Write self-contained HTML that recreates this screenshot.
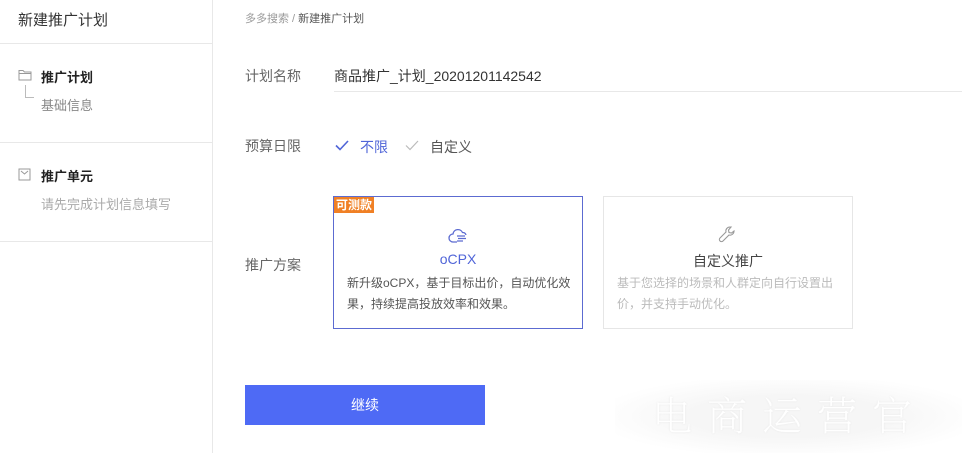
<!DOCTYPE html>
<html><head><meta charset="utf-8"><style>
*{margin:0;padding:0;box-sizing:border-box}
body{width:962px;height:453px;overflow:hidden;background:#fff;font-family:"Liberation Sans","Noto Sans CJK SC",sans-serif;color:#333;position:relative}
.side{position:absolute;left:0;top:0;width:213px;height:453px;border-right:1px solid #e8e8e8}
.a{position:absolute}
.hl{position:absolute;left:0;width:212px;height:1px;background:#e8e8e8}
.lab{position:absolute;left:245px;font-size:14px;color:#666}
.card{position:absolute;top:196px;width:250px;height:133px;border:1px solid #e6e6e6}
</style></head><body>
<div class="side">
<div class="a" style="left:18px;top:9px;font-size:15px;color:#333">新建推广计划</div>
<div class="hl" style="top:43px"></div>
<svg class="a" style="left:18px;top:69px" width="14" height="12" viewBox="0 0 14 12"><path d="M1 1.5h4l1.5 1.5H13v8H1z M1 4.5h12" fill="none" stroke="#999" stroke-width="1"/></svg>
<div class="a" style="left:41px;top:67px;font-size:13px;font-weight:bold;color:#222">推广计划</div>
<div class="a" style="left:25px;top:85px;width:9px;height:13px;border-left:1px solid #bbb;border-bottom:1px solid #bbb"></div>
<div class="a" style="left:41px;top:95px;font-size:13px;color:#888">基础信息</div>
<div class="hl" style="top:142px"></div>
<svg class="a" style="left:18px;top:168px" width="13" height="13" viewBox="0 0 13 13"><path d="M1 1h11v11H1z M3 3l3.5 3L10 3" fill="none" stroke="#999" stroke-width="1"/></svg>
<div class="a" style="left:41px;top:166px;font-size:13px;font-weight:bold;color:#222">推广单元</div>
<div class="a" style="left:41px;top:194px;font-size:13px;color:#aaa">请先完成计划信息填写</div>
<div class="hl" style="top:241px"></div>
</div>
<div class="a" style="left:245px;top:10px;font-size:11px;color:#999">多多搜索 / <span style="color:#555">新建推广计划</span></div>
<div class="lab" style="top:66px">计划名称</div>
<div class="a" style="left:334px;top:66px;font-size:14px;color:#333">商品推广_计划_20201201142542</div>
<div class="a" style="left:334px;top:91px;width:628px;height:1px;background:#e8e8e8"></div>
<div class="lab" style="top:136px">预算日限</div>
<svg class="a" style="left:335px;top:140px" width="14" height="11" viewBox="0 0 14 11"><path d="M1 5.5l4 4L13 1" fill="none" stroke="#5065d8" stroke-width="1.6"/></svg>
<div class="a" style="left:360px;top:137px;font-size:14px;color:#5065d8">不限</div>
<svg class="a" style="left:405px;top:140px" width="14" height="11" viewBox="0 0 14 11"><path d="M1 5.5l4 4L13 1" fill="none" stroke="#bbb" stroke-width="1.2"/></svg>
<div class="a" style="left:430px;top:137px;font-size:14px;color:#555">自定义</div>
<div class="lab" style="top:255px">推广方案</div>
<div class="card" style="left:333px;border-color:#5c6bd1">
<div class="a" style="left:0;top:0;background:#f08025;color:#fff;font-size:12px;font-weight:bold;padding:0 2px;line-height:16px">可测款</div>
<svg class="a" style="left:114px;top:30px" width="22" height="18" viewBox="0 0 22 18"><path d="M9 15H5a4 4 0 0 1 0-8 5 5 0 0 1 9.5-1.5A3.5 3.5 0 0 1 18 8 M9 9h8 M10 11.5h8 M9 14h6" fill="none" stroke="#5c6bd1" stroke-width="1.3"/></svg>
<div class="a" style="left:0;width:248px;top:54px;text-align:center;font-size:14px;color:#5065d8">oCPX</div>
<div class="a" style="left:13px;top:76px;width:226px;font-size:12px;line-height:21px;color:#555">新升级oCPX，基于目标出价，自动优化效果，持续提高投放效率和效果。</div>
</div>
<div class="card" style="left:603px">
<svg class="a" style="left:113px;top:27px" width="22" height="22" viewBox="0 0 22 22"><path d="M13 3a4 4 0 0 0-4 5L3 14a2 2 0 0 0 3 3l6-6a4 4 0 0 0 5-4l-2.5 2-2.5-.5-.5-2.5L14 3z" fill="none" stroke="#999" stroke-width="1.1"/></svg>
<div class="a" style="left:0;width:248px;top:54px;text-align:center;font-size:14px;color:#444">自定义推广</div>
<div class="a" style="left:13px;top:76px;width:226px;font-size:12px;line-height:21px;color:#bbb">基于您选择的场景和人群定向自行设置出价，并支持手动优化。</div>
</div>
<div class="a" style="left:245px;top:385px;width:240px;height:40px;background:#4e6af5;color:#fff;font-size:14px;text-align:center;line-height:40px">继续</div>
<div class="a" style="left:615px;top:380px;width:347px;height:73px;background:radial-gradient(ellipse at center,#f6f6f6 40%,#fff 80%)"></div>
<div class="a" style="left:652px;top:385px;font-size:40px;color:#fff;letter-spacing:15px;font-family:'Noto Serif CJK SC',serif;font-weight:200;text-shadow:0 0 2px #e8e8e8">电商运营官</div>
</body></html>
